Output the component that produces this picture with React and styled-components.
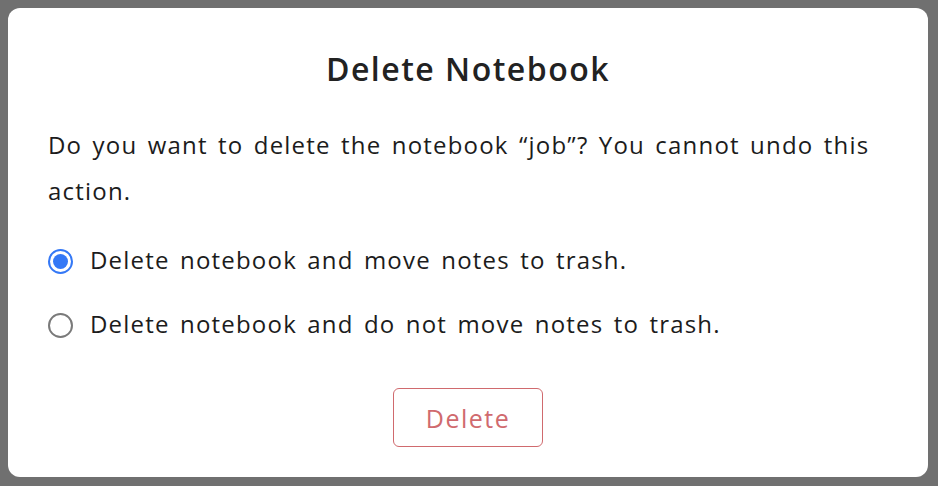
import React, { useState } from "react";
import styled, { createGlobalStyle } from "styled-components";

const Global = createGlobalStyle`
  html, body { margin: 0; padding: 0; background: #707070; }
  body { font-family: "Open Sans", "Noto Sans", sans-serif; }
`;

const Backdrop = styled.div`
  width: 938px;
  height: 486px;
  padding: 8px 10px 9px 8px;
  box-sizing: border-box;
`;

const Dialog = styled.div`
  width: 920px;
  height: 469px;
  box-sizing: border-box;
  background: #ffffff;
  border-radius: 12px;
  padding: 40px 40px 30px 40px;
  display: flex;
  flex-direction: column;
  color: #1c1c1c;
`;

const Title = styled.h1`
  margin: 0;
  text-align: center;
  font-size: 32px;
  font-weight: 600;
  line-height: 42px;
  letter-spacing: 1.5px;
  color: #222;
`;

const Message = styled.p`
  margin: 32px 0 0 0;
  font-size: 24px;
  line-height: 46px;
  letter-spacing: 1.2px;
  word-spacing: 2.9px;
  max-width: 840px;
`;

const Options = styled.div`
  margin-top: 22px;
  display: flex;
  flex-direction: column;
  gap: 18px;
`;

const OptionLabel = styled.label`
  display: flex;
  align-items: center;
  gap: 17px;
  height: 46px;
  font-size: 24px;
  letter-spacing: 1.2px;
  word-spacing: 2.9px;
  cursor: pointer;
`;

const HiddenInput = styled.input`
  position: absolute;
  opacity: 0;
  width: 0;
  height: 0;
`;

const RadioMark = styled.span`
  width: 25px;
  height: 25px;
  margin-top: 4px;
  box-sizing: border-box;
  border-radius: 50%;
  border: 2px solid ${(p) => (p.$checked ? "#3478f6" : "#7a7a7a")};
  display: flex;
  align-items: center;
  justify-content: center;
  flex-shrink: 0;
  &::after {
    content: "";
    width: 15px;
    height: 15px;
    border-radius: 50%;
    background: #3478f6;
    display: ${(p) => (p.$checked ? "block" : "none")};
  }
`;

const Footer = styled.div`
  margin-top: auto;
  display: flex;
  justify-content: center;
`;

const DeleteButton = styled.button`
  width: 150px;
  height: 59px;
  box-sizing: border-box;
  background: #fff;
  border: 1.5px solid #d06a6e;
  border-radius: 6px;
  color: #d06a6e;
  font-family: "Open Sans", "Noto Sans", sans-serif;
  font-size: 25px;
  letter-spacing: 1.5px;
  cursor: pointer;
`;

export default function App() {
  const [choice, setChoice] = useState("trash");
  const options = [
    { id: "trash", label: "Delete notebook and move notes to trash." },
    { id: "keep", label: "Delete notebook and do not move notes to trash." },
  ];
  return (
    <>
      <Global />
      <Backdrop>
        <Dialog>
          <Title>Delete Notebook</Title>
          <Message>
            Do you want to delete the notebook “job”? You cannot undo this action.
          </Message>
          <Options>
            {options.map((o) => (
              <OptionLabel key={o.id}>
                <HiddenInput
                  type="radio"
                  name="del"
                  checked={choice === o.id}
                  onChange={() => setChoice(o.id)}
                />
                <RadioMark $checked={choice === o.id} />
                {o.label}
              </OptionLabel>
            ))}
          </Options>
          <Footer>
            <DeleteButton>Delete</DeleteButton>
          </Footer>
        </Dialog>
      </Backdrop>
    </>
  );
}
